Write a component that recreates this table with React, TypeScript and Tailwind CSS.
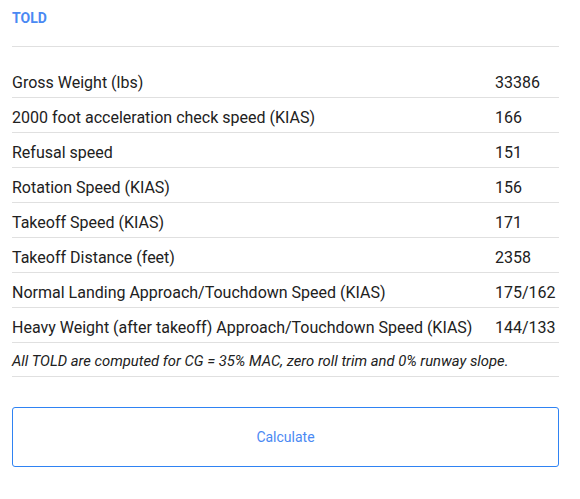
import React from "react";

const rows: [string, string][] = [
  ["Gross Weight (lbs)", "33386"],
  ["2000 foot acceleration check speed (KIAS)", "166"],
  ["Refusal speed", "151"],
  ["Rotation Speed (KIAS)", "156"],
  ["Takeoff Speed (KIAS)", "171"],
  ["Takeoff Distance (feet)", "2358"],
  ["Normal Landing Approach/Touchdown Speed (KIAS)", "175/162"],
  ["Heavy Weight (after takeoff) Approach/Touchdown Speed (KIAS)", "144/133"],
];

export default function App() {
  return (
    <div
      className="w-[580px] h-[499px] bg-white text-[#212121]"
      style={{ fontFamily: "Roboto, 'Liberation Sans', sans-serif" }}
    >
      <div className="ml-3 w-[547px]">
        <div className="pt-2 pb-[18px] border-b border-[#e0e0e0]">
          <div className="text-[14px] leading-5 font-bold text-[#4a89f3]">TOLD</div>
        </div>
        <div className="mt-4">
          {rows.map(([label, value]) => (
            <div
              key={label}
              className="grid grid-cols-[1fr_64px] h-[35px] pt-2 border-b border-[#e0e0e0] text-[16px] leading-6"
            >
              <div>{label}</div>
              <div>{value}</div>
            </div>
          ))}
          <div className="h-[34px] pt-[8px] border-b border-[#e0e0e0] text-[14.8px] leading-5 italic">
            All TOLD are computed for CG = 35% MAC, zero roll trim and 0% runway slope.
          </div>
        </div>
        <button className="mt-[30px] w-full h-[60px] border border-[#2f83f3] rounded-[3px] text-[14px] text-[#4a89f3] flex items-center justify-center">
          Calculate
        </button>
      </div>
    </div>
  );
}
